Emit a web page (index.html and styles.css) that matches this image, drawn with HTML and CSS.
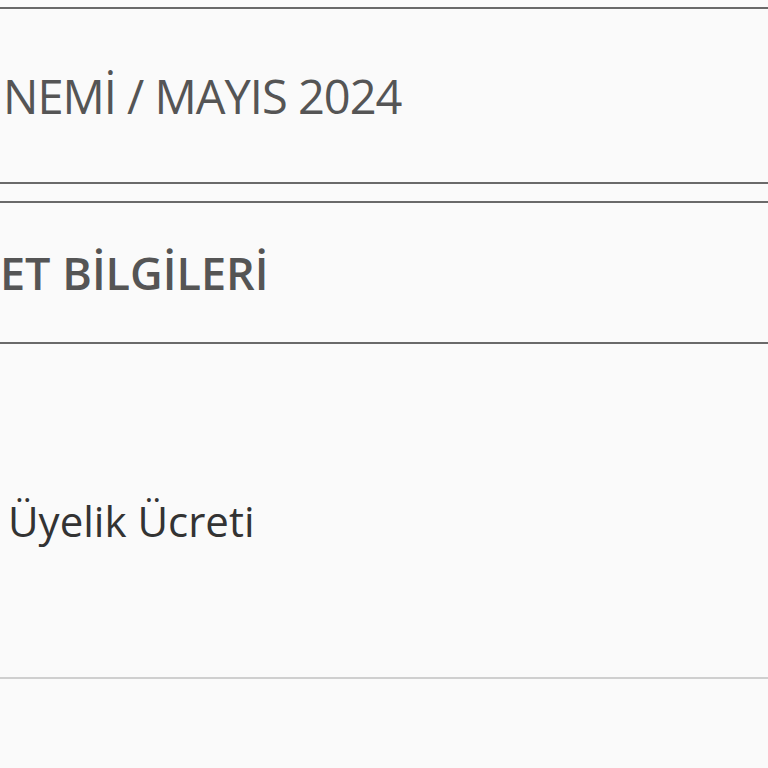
FILE: index.html
```html
<!DOCTYPE html>
<html lang="tr">
<head>
  <meta charset="UTF-8" />
  <meta name="viewport" content="width=device-width, initial-scale=1" />
  <title>Aidat Bilgileri</title>
  <link rel="stylesheet" href="styles.css">
</head>
<body>
  <div class="page">
    <div class="panel period">
      <span class="period-text">NEMİ / MAYIS 2024</span>
    </div>
    <div class="panel heading">
      <h2>ET BİLGİLERİ</h2>
    </div>
    <div class="row">
      <span class="row-label">Üyelik Ücreti</span>
    </div>
  </div>
</body>
</html>
```

FILE: styles.css
```css
/* Zoomed membership fee page */
body, html {
  margin: 0;
  height: 100%;
  background: #fafafa;
  font-family: "Open Sans", Arial, sans-serif;
  overflow: hidden;
}
.page {
  padding-top: 7px;
}
.panel {
  border-top: 2px solid #6a6a6a;
  border-bottom: 2px solid #6a6a6a;
  display: flex;
  align-items: center;
}
.period {
  height: 173px;
  padding-left: 3px;
}
.period-text {
  font-size: 47px;
  letter-spacing: -1px;
  color: #555;
}
.heading {
  margin-top: 17px;
  height: 139px;
}
h2 {
  margin: 0;
  font-size: 45px;
  font-weight: 600;
  color: #555;
}
.row {
  height: 313px;
  padding-top: 20px;
  border-bottom: 2px solid #cfcfcf;
  display: flex;
  align-items: center;
  padding-left: 8px;
}
.row-label {
  font-size: 42px;
  color: #333;
}
```
